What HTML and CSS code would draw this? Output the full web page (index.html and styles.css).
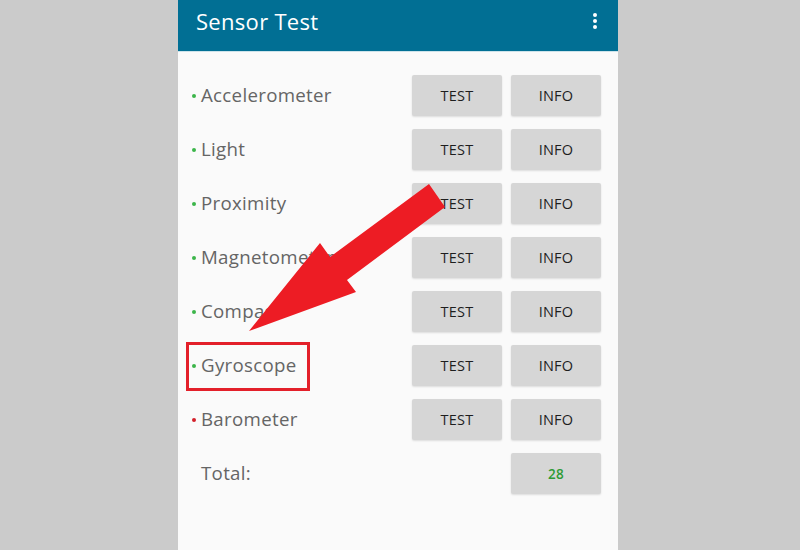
FILE: index.html
```html
<!DOCTYPE html>
<html>
<head>
<meta charset="utf-8">
<link rel="stylesheet" href="styles.css">
</head>
<body>
<div class="phone">
  <header class="appbar">
    <span class="title">Sensor Test</span>
    <span class="menu"><i></i><i></i><i></i></span>
  </header>
  <div class="list">
    <div class="row"><span class="label"><b class="dot ok"></b>Accelerometer</span><span class="btn">TEST</span><span class="btn">INFO</span></div>
    <div class="row"><span class="label"><b class="dot ok"></b>Light</span><span class="btn">TEST</span><span class="btn">INFO</span></div>
    <div class="row"><span class="label"><b class="dot ok"></b>Proximity</span><span class="btn">TEST</span><span class="btn">INFO</span></div>
    <div class="row"><span class="label"><b class="dot ok"></b>Magnetometer</span><span class="btn">TEST</span><span class="btn">INFO</span></div>
    <div class="row"><span class="label"><b class="dot ok"></b>Compass</span><span class="btn">TEST</span><span class="btn">INFO</span></div>
    <div class="row"><span class="label"><b class="dot ok"></b>Gyroscope</span><span class="btn">TEST</span><span class="btn">INFO</span></div>
    <div class="row"><span class="label"><b class="dot bad"></b>Barometer</span><span class="btn">TEST</span><span class="btn">INFO</span></div>
    <div class="row"><span class="label total">Total:</span><span class="btn count">28</span></div>
  </div>
</div>
<svg class="overlay" width="800" height="550" viewBox="0 0 800 550">
  <rect x="187.5" y="343.5" width="121" height="46" fill="none" stroke="#e3202a" stroke-width="3"/>
  <polygon points="249,331 320,243 330,257 429,184 445,207 347,280 356,292" fill="#ed1c24"/>
</svg>
</body>
</html>
```
FILE: styles.css
```css
html, body {
  margin: 0;
  padding: 0;
}
body {
  background: #cbcbcb;
  width: 800px;
  height: 550px;
  overflow: hidden;
  position: relative;
  font-family: "Open Sans", "Liberation Sans", sans-serif;
}
.phone {
  margin-left: 178px;
  width: 440px;
  height: 550px;
  background: #fafafa;
}
.appbar {
  height: 51px;
  background: #016f94;
  border-bottom: 1px solid #cde3ea;
  display: flex;
  align-items: center;
  justify-content: space-between;
  padding: 0 21px 0 18px;
}
.title {
  color: #fff;
  font-size: 22px;
  letter-spacing: 0.3px;
  margin-top: -9px;
}
.menu {
  display: flex;
  flex-direction: column;
  gap: 2px;
  margin-top: -9px;
}
.menu i {
  display: block;
  width: 4px;
  height: 4px;
  border-radius: 50%;
  background: #fff;
}
.list {
  padding: 23px 17px 0 14px;
  display: flex;
  flex-direction: column;
  gap: 13px;
}
.row {
  display: flex;
  align-items: center;
  height: 41px;
  gap: 9px;
}
.label {
  flex: 1;
  display: flex;
  align-items: center;
  color: #656565;
  font-size: 18.7px;
  letter-spacing: 0.3px;
  margin-top: -3px;
}
.label.total {
  padding-left: 9px;
}
.dot {
  width: 4px;
  height: 4px;
  border-radius: 50%;
  margin-right: 5px;
  margin-top: 3px;
}
.dot.ok { background: #3bb54a; }
.dot.bad { background: #d3202a; }
.btn {
  width: 90px;
  height: 41px;
  background: #d6d6d6;
  border-radius: 2px;
  box-shadow: 0 1px 2px rgba(0,0,0,0.12);
  display: flex;
  align-items: center;
  justify-content: center;
  font-size: 14.5px;
  color: #1e1e1e;
  letter-spacing: 0.2px;
}
.btn.count {
  color: #2e9b35;
  font-weight: 600;
  font-size: 13.5px;
}
.overlay {
  position: absolute;
  left: 0;
  top: 0;
}
```
